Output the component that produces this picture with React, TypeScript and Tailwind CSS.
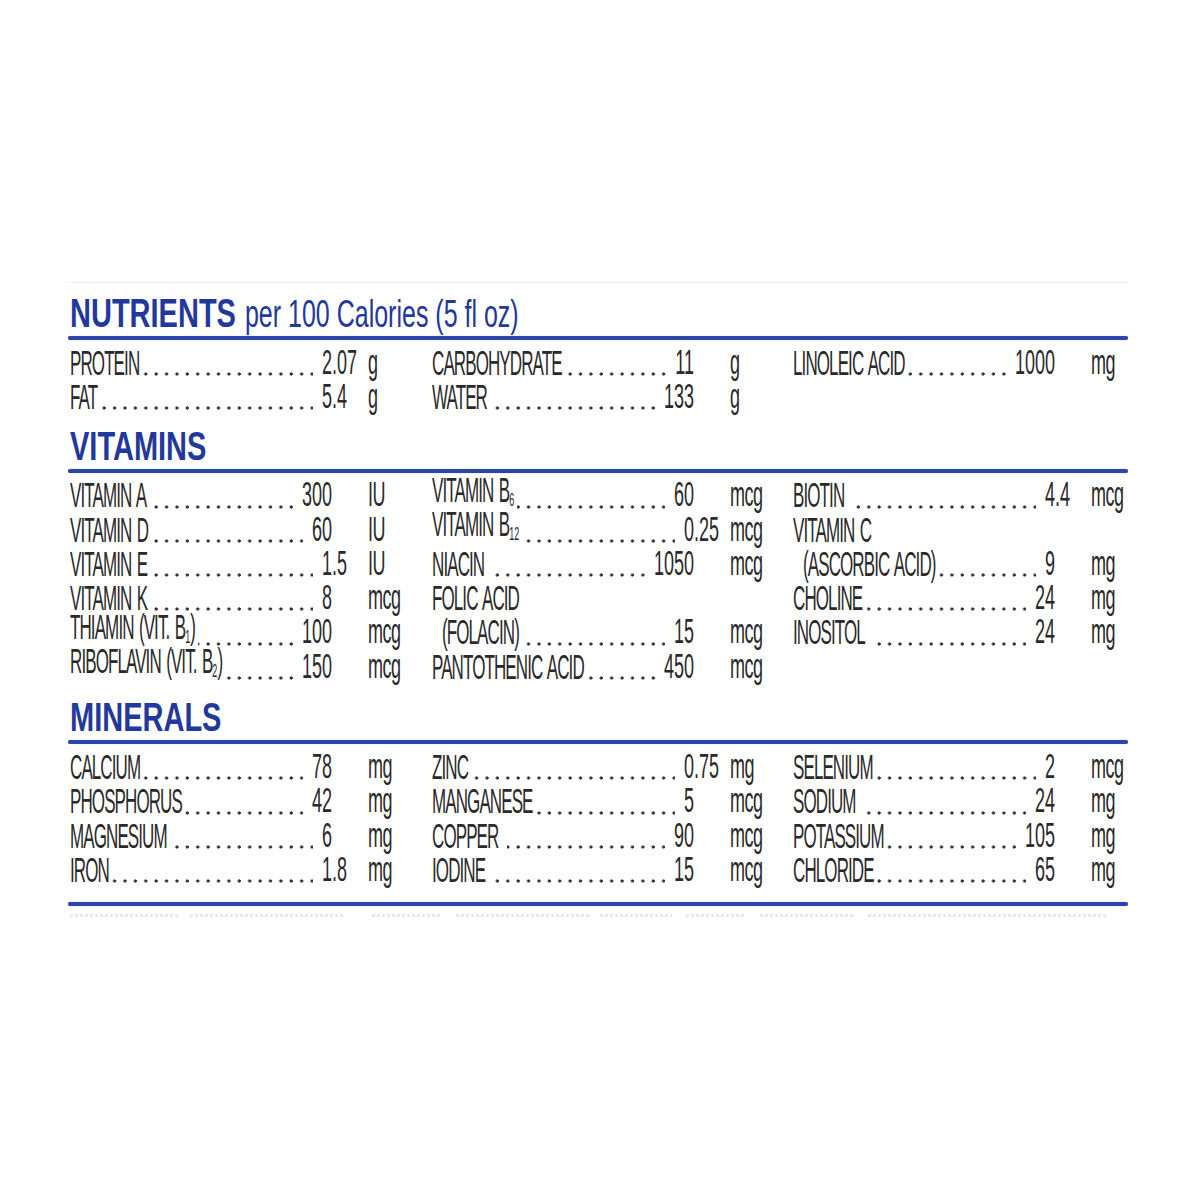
import React from "react";

type Item = {
  name?: React.ReactNode;
  v?: string;
  d?: string;
  u?: string;
  indent?: boolean;
};

const Sub = ({ c }: { c: string }) => (
  <span className="text-[9px] tracking-normal align-[-2px]">{c}</span>
);

const nutrients: Item[][] = [
  [
    { name: "PROTEIN", v: "2", d: ".07", u: "g" },
    { name: "FAT", v: "5", d: ".4", u: "g" },
  ],
  [
    { name: "CARBOHYDRATE", v: "11", u: "g" },
    { name: "WATER", v: "133", u: "g" },
  ],
  [{ name: "LINOLEIC ACID", v: "1000", u: "mg" }],
];

const vitamins: Item[][] = [
  [
    { name: "VITAMIN A", v: "300", u: "IU" },
    { name: "VITAMIN D", v: "60", u: "IU" },
    { name: "VITAMIN E", v: "1", d: ".5", u: "IU" },
    { name: "VITAMIN K", v: "8", u: "mcg" },
    {
      name: (
        <>
          THIAMIN (VIT. B<Sub c="1" />)
        </>
      ),
      v: "100",
      u: "mcg",
    },
    {
      name: (
        <>
          RIBOFLAVIN (VIT. B<Sub c="2" />)
        </>
      ),
      v: "150",
      u: "mcg",
    },
  ],
  [
    {
      name: (
        <>
          VITAMIN B<Sub c="6" />
        </>
      ),
      v: "60",
      u: "mcg",
    },
    {
      name: (
        <>
          VITAMIN B<Sub c="12" />
        </>
      ),
      v: "0",
      d: ".25",
      u: "mcg",
    },
    { name: "NIACIN ", v: "1050", u: "mcg" },
    { name: "FOLIC ACID" },
    { name: "(FOLACIN)", v: "15", u: "mcg", indent: true },
    { name: "PANTOTHENIC ACID", v: "450", u: "mcg" },
  ],
  [
    { name: "BIOTIN ", v: "4", d: ".4", u: "mcg" },
    { name: "VITAMIN C" },
    { name: "(ASCORBIC ACID)", v: "9", u: "mg", indent: true },
    { name: "CHOLINE", v: "24", u: "mg" },
    { name: "INOSITOL ", v: "24", u: "mg" },
  ],
];

const minerals: Item[][] = [
  [
    { name: "CALCIUM", v: "78", u: "mg" },
    { name: "PHOSPHORUS", v: "42", u: "mg" },
    { name: "MAGNESIUM", v: "6", u: "mg" },
    { name: "IRON", v: "1", d: ".8", u: "mg" },
  ],
  [
    { name: "ZINC", v: "0", d: ".75", u: "mg" },
    { name: "MANGANESE", v: "5", u: "mcg" },
    { name: "COPPER ", v: "90", u: "mcg" },
    { name: "IODINE ", v: "15", u: "mcg" },
  ],
  [
    { name: "SELENIUM", v: "2", u: "mcg" },
    { name: "SODIUM ", v: "24", u: "mg" },
    { name: "POTASSIUM", v: "105", u: "mg" },
    { name: "CHLORIDE", v: "65", u: "mg" },
  ],
];

function Row({ item }: { item: Item }) {
  const { name, v, d, u, indent } = item;
  return (
    <div className="flex h-[34.3px] items-stretch text-[#2a2a2a]">
      <div
        className={
          v
            ? "flex w-[262px] items-stretch bg-[radial-gradient(circle_at_3px_28px,#333333_1.3px,transparent_1.9px)] bg-[length:10.4px_100%] bg-repeat-x"
            : "flex w-[262px] items-stretch"
        }
      >
        <span
          className={
            indent
              ? "flex items-center whitespace-pre bg-white pl-[10px] pr-[3px]"
              : "flex items-center whitespace-pre bg-white pr-[3px]"
          }
        >
          <span className="inline-block scale-y-[2.05] text-[17px] leading-[15px] tracking-[-0.9px] [word-spacing:1.5px]">
            {name}
          </span>
        </span>
        <span className="flex-1" />
        {v && (
          <span className="flex items-center bg-white pl-[9px]">
            <span className="inline-block scale-y-[1.94] text-[18px] leading-[15px]">
              {v}
            </span>
          </span>
        )}
      </div>
      <div className="flex w-[36px] items-center">
        {d && (
          <span className="inline-block scale-y-[1.94] text-[18px] leading-[15px]">
            {d}
          </span>
        )}
      </div>
      <div className="flex items-center">
        {u && (
          <span className="inline-block scale-y-[1.94] text-[18px] leading-[15px] tracking-[-0.5px]">
            {u}
          </span>
        )}
      </div>
    </div>
  );
}

function Grid({ cols }: { cols: Item[][] }) {
  return (
    <div className="ml-[2px] grid grid-cols-[362px_361px_1fr]">
      {cols.map((col, i) => (
        <div key={i} className="flex flex-col">
          {col.map((it, j) => (
            <Row key={j} item={it} />
          ))}
        </div>
      ))}
    </div>
  );
}

function Heading({
  children,
  h,
  pt,
}: {
  children: React.ReactNode;
  h: string;
  pt: string;
}) {
  return (
    <div className={`${h} ${pt}`}>
      <div className="flex h-[34px] items-center gap-[9px] pl-[2px] text-[#22389c]">
        {children}
      </div>
    </div>
  );
}

const Big = ({ t }: { t: string }) => (
  <span className="inline-block scale-y-[1.42] text-[29px] font-bold leading-[22px]">
    {t}
  </span>
);

const Rule = () => (
  <div className="h-[4px] rounded-full bg-[#2d45a6] shadow-[0_0_1px_#7d8fd6]" />
);

const faint = [
  [2, 110],
  [10, 155],
  [27, 68],
  [16, 134],
  [10, 72],
  [14, 59],
  [15, 95],
  [13, 240],
];

export default function App() {
  return (
    <div className="min-h-[1200px] w-[1200px] bg-white font-['Liberation_Sans',Arial,sans-serif]">
      <div className="ml-[68px] w-[1060px] pt-[282px]">
        <div className="h-px bg-[#efefef]" />
        <Heading h="h-[53px]" pt="pt-[13px]">
          <Big t="NUTRIENTS" />
          <span className="inline-block scale-y-[1.55] text-[25px] leading-[20px]">
            per 100 Calories (5 fl oz)
          </span>
        </Heading>
        <Rule />
        <div className="pt-[6px]">
          <Grid cols={nutrients} />
        </div>
        <Heading h="h-[54px]" pt="pt-[14px]">
          <Big t="VITAMINS" />
        </Heading>
        <Rule />
        <div className="pt-[6px]">
          <Grid cols={vitamins} />
        </div>
        <Heading h="h-[56px]" pt="pt-[16px]">
          <Big t="MINERALS" />
        </Heading>
        <Rule />
        <div className="pt-[6px]">
          <Grid cols={minerals} />
        </div>
        <div className="mt-[14px]">
          <Rule />
        </div>
        <div className="mt-[8px] flex h-[3px]">
          {faint.map(([ml, w], i) => (
            <div
              key={i}
              className="h-[3px] bg-[repeating-linear-gradient(90deg,#e8e8e8_0px,#e8e8e8_3px,transparent_3px,transparent_5px)]"
              style={{ marginLeft: ml, width: w }}
            />
          ))}
        </div>
      </div>
    </div>
  );
}
